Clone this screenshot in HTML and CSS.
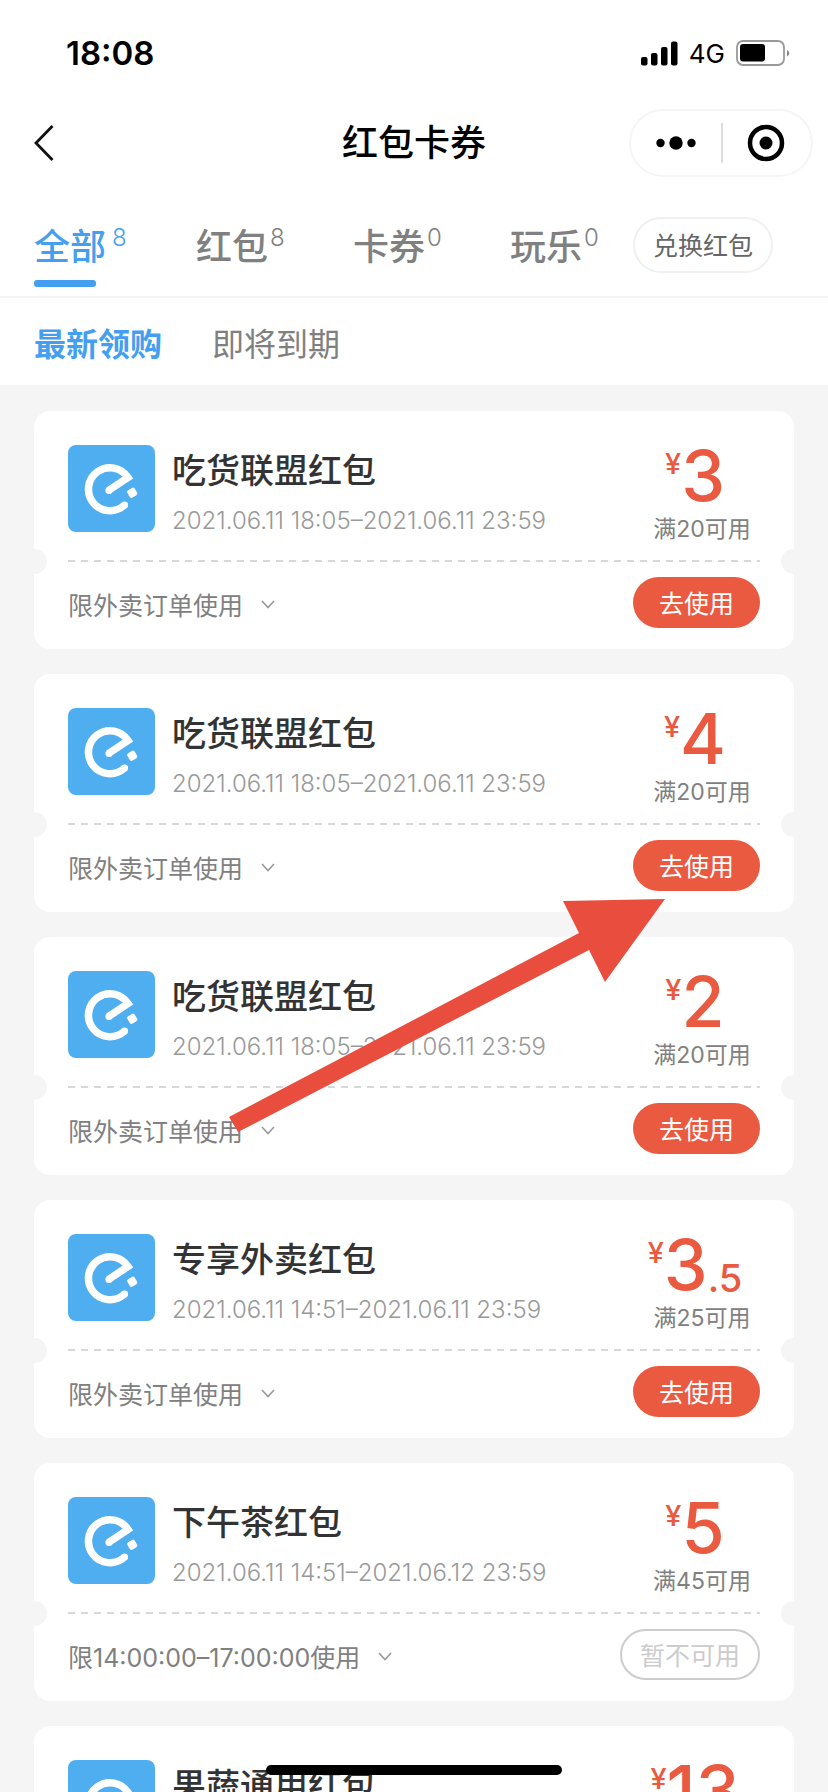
FILE: index.html
```
<!DOCTYPE html>
<html lang="zh-CN">
<head>
<meta charset="utf-8">
<meta name="viewport" content="width=device-width, initial-scale=1">
<title>红包卡券</title>
<link rel="stylesheet" href="styles.css">
</head>
<body>
<svg class="defs" aria-hidden="true">
  <symbol id="logo" viewBox="0 0 87 87">
    <path d="M56 60.500A21.500 21.500 0 1 1 60 32.500L40.500 45.500" fill="none" stroke="#fff" stroke-width="7.500" stroke-linejoin="miter" stroke-linecap="butt"/>
    <circle cx="56.500" cy="60" r="3.600" fill="#fff"/>
    <circle cx="41" cy="45.500" r="3.600" fill="#fff"/>
    <rect x="60" y="43.500" width="8.500" height="8.500" rx="2" transform="rotate(-32 64.250 47.750)" fill="#fff"/>
  </symbol>
  <symbol id="down" viewBox="0 0 14 9"><path d="M1 1L7 7.500L13 1" fill="none" stroke="#999" stroke-width="1.600"/></symbol>
</svg>

<header class="top">
  <div class="status">
    <span class="clock">18:08</span>
    <div class="signals">
      <svg width="37" height="25" viewBox="0 0 37 25"><rect x="0" y="16" width="6.500" height="8.500" rx="2"/><rect x="10" y="12" width="6.500" height="12.500" rx="2"/><rect x="20" y="6" width="6.500" height="18.500" rx="2"/><rect x="30" y="0.500" width="6.500" height="24" rx="2"/></svg>
      <span class="network">4G</span>
      <svg width="54" height="26" viewBox="0 0 54 26"><rect x="1" y="1" width="47" height="24" rx="6" fill="none" stroke="#999" stroke-width="1.800"/><rect x="4" y="4" width="25" height="17.500" rx="3"/><path d="M51 10a3.500 3.500 0 0 1 0 6.500z" fill="#888"/></svg>
    </div>
  </div>
  <div class="navbar">
    <button class="back" aria-label="返回"><svg width="20" height="36" viewBox="0 0 20 36"><path d="M18.500 1L2 18L18.500 35" fill="none" stroke="#111" stroke-width="2.800"/></svg></button>
    <h1 class="heading">红包卡券</h1>
    <div class="capsule">
      <button class="capsule-btn" aria-label="更多"><svg width="40" height="14" viewBox="0 0 40 14"><circle cx="4.500" cy="7" r="4.200"/><circle cx="20" cy="7" r="6.700"/><circle cx="35.500" cy="7" r="4.200"/></svg></button>
      <button class="capsule-btn" aria-label="关闭"><svg width="38" height="38" viewBox="0 0 38 38"><circle cx="19" cy="19" r="16" fill="none" stroke="#000" stroke-width="4.500"/><circle cx="19" cy="19" r="6.500"/></svg></button>
    </div>
  </div>
  <nav class="tabs">
    <button class="tab active">全部<sup class="count">8</sup></button>
    <button class="tab">红包<sup class="count">8</sup></button>
    <button class="tab">卡券<sup class="count">0</sup></button>
    <button class="tab">玩乐<sup class="count">0</sup></button>
    <button class="redeem">兑换红包</button>
  </nav>
  <nav class="sorts">
    <button class="sort active">最新领购</button>
    <button class="sort">即将到期</button>
  </nav>
</header>

<main class="list">
  <article class="card">
    <div class="info">
      <svg class="logo"><use href="#logo"/></svg>
      <div class="text"><h2 class="name">吃货联盟红包</h2><p class="date">2021.06.11 18:05–2021.06.11 23:59</p></div>
      <div class="value"><p class="price"><span class="yen">¥</span>3</p><p class="limit">满20可用</p></div>
    </div>
    <div class="foot"><button class="rule">限外卖订单使用<svg class="down"><use href="#down"/></svg></button><button class="use">去使用</button></div>
  </article>
  <article class="card">
    <div class="info">
      <svg class="logo"><use href="#logo"/></svg>
      <div class="text"><h2 class="name">吃货联盟红包</h2><p class="date">2021.06.11 18:05–2021.06.11 23:59</p></div>
      <div class="value"><p class="price"><span class="yen">¥</span>4</p><p class="limit">满20可用</p></div>
    </div>
    <div class="foot"><button class="rule">限外卖订单使用<svg class="down"><use href="#down"/></svg></button><button class="use">去使用</button></div>
  </article>
  <article class="card">
    <div class="info">
      <svg class="logo"><use href="#logo"/></svg>
      <div class="text"><h2 class="name">吃货联盟红包</h2><p class="date">2021.06.11 18:05–2021.06.11 23:59</p></div>
      <div class="value"><p class="price"><span class="yen">¥</span>2</p><p class="limit">满20可用</p></div>
    </div>
    <div class="foot"><button class="rule">限外卖订单使用<svg class="down"><use href="#down"/></svg></button><button class="use">去使用</button></div>
  </article>
  <article class="card">
    <div class="info">
      <svg class="logo"><use href="#logo"/></svg>
      <div class="text"><h2 class="name">专享外卖红包</h2><p class="date">2021.06.11 14:51–2021.06.11 23:59</p></div>
      <div class="value"><p class="price"><span class="yen">¥</span>3<span class="cents">.5</span></p><p class="limit">满25可用</p></div>
    </div>
    <div class="foot"><button class="rule">限外卖订单使用<svg class="down"><use href="#down"/></svg></button><button class="use">去使用</button></div>
  </article>
  <article class="card">
    <div class="info">
      <svg class="logo"><use href="#logo"/></svg>
      <div class="text"><h2 class="name">下午茶红包</h2><p class="date">2021.06.11 14:51–2021.06.12 23:59</p></div>
      <div class="value"><p class="price"><span class="yen">¥</span>5</p><p class="limit">满45可用</p></div>
    </div>
    <div class="foot"><button class="rule">限14:00:00–17:00:00使用<svg class="down"><use href="#down"/></svg></button><button class="use off" disabled>暂不可用</button></div>
  </article>
  <article class="card">
    <div class="info">
      <svg class="logo"><use href="#logo"/></svg>
      <div class="text"><h2 class="name">果蔬通用红包</h2></div>
      <div class="value"><p class="price"><span class="yen">¥</span>13</p></div>
    </div>
  </article>
</main>

<svg class="arrow" viewBox="0 0 436 234" aria-hidden="true"><path d="M436 0L334 2L350 34L0 218L9 233L360 51L376 83Z" fill="#e84d3d"/></svg>
<div class="home-bar"></div>
</body>
</html>
```
FILE: styles.css
```
* { box-sizing: border-box; }

body {
  position: relative;
  display: flex;
  flex-direction: column;
  height: 100vh;
  margin: 0;
  overflow: hidden;
  background: #f5f5f5;
  color: #000;
  font-family: Inter, "Noto Sans CJK SC", sans-serif;
}

h1, h2, p { margin: 0; }

button {
  padding: 0;
  border: 0;
  background: none;
  color: inherit;
  font: inherit;
}

svg { display: block; }
.defs { position: absolute; width: 0; height: 0; }

.top { flex: none; background: #fff; }

.status {
  display: flex;
  justify-content: space-between;
  align-items: center;
  height: 106px;
  padding: 0 38px 0 66px;
}
.clock { font-size: 33px; font-weight: 600; }
.signals { display: flex; align-items: center; gap: 11px; }
.network { font-size: 26px; }

.navbar {
  display: grid;
  grid-template-columns: 1fr auto 1fr;
  align-items: center;
  height: 74px;
  padding: 0 15px;
}
.back { justify-self: start; margin-left: 19px; }
.heading { font-size: 36px; font-weight: 500; line-height: 48px; }
.capsule {
  display: flex;
  justify-self: end;
  width: 184px;
  height: 68px;
  border: 2px solid #f5f5f5;
  border-radius: 34px;
}
.capsule-btn {
  display: flex;
  flex: 1;
  align-items: center;
  justify-content: center;
}
.capsule-btn + .capsule-btn {
  background: linear-gradient(#ddd, #ddd) left center / 2px 40px no-repeat;
}

.tabs {
  display: grid;
  grid-template-columns: 162px 157px 157px 123px auto;
  justify-content: start;
  height: 118px;
  padding: 29px 34px 0;
  border-bottom: 2px solid #f5f5f5;
}
.tab {
  position: relative;
  display: flex;
  align-items: flex-start;
  gap: 2px;
  height: 78px;
  padding-top: 12px;
  color: #808080;
  font-size: 36px;
  font-weight: 500;
  line-height: 52px;
}
.count {
  font-size: 24px;
  font-weight: 300;
  line-height: 34px;
}
.tab.active { gap: 6px; color: #459ff0; }
.tab.active::after {
  position: absolute;
  bottom: 0;
  left: 0;
  width: 62px;
  height: 7px;
  border-radius: 3px;
  background: #459ff0;
  content: "";
}
.redeem {
  width: 140px;
  height: 56px;
  margin-top: 8px;
  padding-bottom: 2px;
  border: 2px solid #f0f0f0;
  border-radius: 28px;
  color: #666;
  font-size: 25px;
}

.sorts {
  display: flex;
  gap: 50px;
  height: 87px;
  padding: 0 34px;
  color: #808080;
  font-size: 32px;
}
.sort.active { color: #459ff0; font-weight: 700; }

.list {
  display: flex;
  flex: 1;
  flex-direction: column;
  gap: 25px;
  min-height: 0;
  padding: 26px 34px 0;
  overflow: hidden;
}
.card {
  position: relative;
  flex: none;
  padding: 0 34px;
  border-radius: 16px;
  background: #fff;
}
.card::before,
.card::after {
  position: absolute;
  top: 138px;
  width: 25px;
  height: 25px;
  border-radius: 50%;
  background: #f5f5f5;
  content: "";
}
.card::before { left: -12px; }
.card::after { right: -12px; }

.info {
  display: flex;
  height: 151px;
  padding-top: 34px;
  background: repeating-linear-gradient(90deg, #d8d8d8 0 7px, transparent 7px 13px) bottom / 100% 2px no-repeat;
}
.logo {
  flex: none;
  width: 87px;
  height: 87px;
  border-radius: 8px;
  background: #4faeef;
}
.text { flex: 1; padding-left: 17px; }
.name {
  padding-top: 2px;
  color: #333;
  font-size: 34px;
  font-weight: 500;
  line-height: 48px;
}
.date {
  margin-top: 12px;
  color: #999;
  font-size: 24px;
  font-weight: 300;
  line-height: 28px;
}
.value { width: 116px; text-align: center; white-space: nowrap; }
.price {
  display: flex;
  justify-content: center;
  padding-right: 14px;
  color: #ea5a40;
  font-size: 70px;
  font-weight: 500;
  line-height: 62px;
}
.yen { font-size: 29px; line-height: 38px; }
.cents { height: 62px; font-size: 38px; line-height: 88px; }
.limit {
  margin-top: 6px;
  color: #808080;
  font-size: 23px;
  line-height: 32px;
}

.foot {
  display: flex;
  align-items: flex-start;
  justify-content: space-between;
  height: 87px;
  padding-top: 15px;
}
.rule {
  display: flex;
  align-items: center;
  gap: 18px;
  height: 54px;
  color: #808080;
  font-size: 25px;
}
.down { width: 14px; height: 9px; }
.use {
  width: 127px;
  height: 51px;
  padding-bottom: 2px;
  border-radius: 26px;
  background: #ea5a40;
  color: #fff;
  font-size: 25px;
}
.use.off {
  width: 140px;
  border: 2px solid #ccc;
  background: #fff;
  color: #ccc;
}

.arrow {
  position: absolute;
  top: 899px;
  left: 229px;
  width: 436px;
  height: 234px;
}
.home-bar {
  position: absolute;
  bottom: 17px;
  left: 50%;
  width: 296px;
  height: 10px;
  border-radius: 5px;
  background: #000;
  transform: translateX(-50%);
}
```
